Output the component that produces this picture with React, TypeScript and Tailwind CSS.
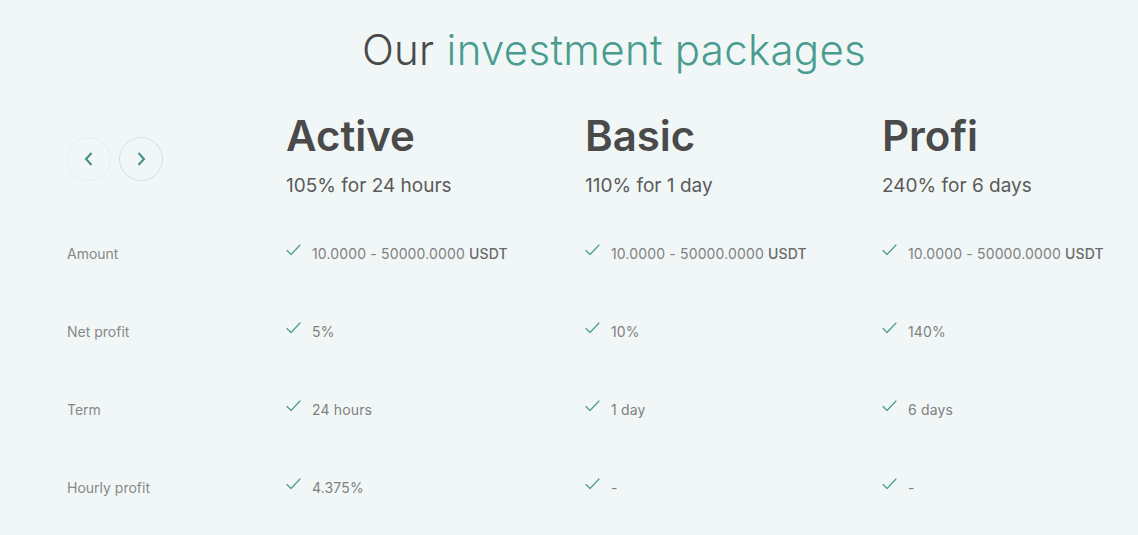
import React from "react";

const Check = () => (
  <svg width="15" height="12" viewBox="0 0 15 12" fill="none" className="shrink-0 mt-[-6px]">
    <path d="M1 6.5 L5 10.5 L14 1" stroke="#4a9c90" strokeWidth="1.2" strokeLinecap="round" strokeLinejoin="round" />
  </svg>
);

const plans = [
  { name: "Active", sub: "105% for 24 hours", profit: "5%", term: "24 hours", hourly: "4.375%" },
  { name: "Basic", sub: "110% for 1 day", profit: "10%", term: "1 day", hourly: "-" },
  { name: "Profi", sub: "240% for 6 days", profit: "140%", term: "6 days", hourly: "-" },
];

const Cell = ({ children }: { children: React.ReactNode }) => (
  <div className="flex items-center gap-[11px] h-[78px] text-[14px] text-[#808080] tracking-[0.15px]">
    <Check />
    <span>{children}</span>
  </div>
);

export default function App() {
  const font = { fontFamily: "Inter, 'Noto Sans', sans-serif" };
  return (
    <div className="w-[1138px] h-[535px] bg-[#f1f7f7] overflow-hidden" style={font}>
      <h1 className="text-center text-[42px] font-light text-[#4a4a4a] pt-[24px] pl-[90px] leading-[52px] tracking-[0.3px]">
        Our <span className="text-[#4a9c90]">investment packages</span>
      </h1>
      <div className="grid grid-cols-[219px_299px_297px_1fr] pl-[67px] mt-[23px]">
        <div className="flex items-center gap-[8px] h-[115px] pt-[4px]">
          <button className="w-[44px] h-[44px] rounded-full border border-[#e8eeee] flex items-center justify-center">
            <svg width="10" height="16" viewBox="0 0 10 16" fill="none">
              <path d="M7.5 2 L2 8 L7.5 14" stroke="#3f8f86" strokeWidth="2" />
            </svg>
          </button>
          <button className="w-[44px] h-[44px] rounded-full border border-[#d9dede] flex items-center justify-center">
            <svg width="10" height="16" viewBox="0 0 10 16" fill="none">
              <path d="M2.5 2 L8 8 L2.5 14" stroke="#3f8f86" strokeWidth="2" />
            </svg>
          </button>
        </div>
        {plans.map((p) => (
          <div key={p.name} className="h-[115px] pt-[11px]">
            <div className="text-[42px] font-semibold text-[#4a4a4a] leading-[52px]">{p.name}</div>
            <div className="text-[19px] text-[#5a5a5a] mt-[12px] leading-[24px]">{p.sub}</div>
          </div>
        ))}

        <div className="h-[78px] flex items-center text-[14px] text-[#888888]">Amount</div>
        {plans.map((p) => (
          <Cell key={p.name + "a"}>
            10.0000 - 50000.0000 <span className="font-medium text-[#6a6a6a]">USDT</span>
          </Cell>
        ))}

        <div className="h-[78px] flex items-center text-[14px] text-[#888888]">Net profit</div>
        {plans.map((p) => (
          <Cell key={p.name + "b"}>{p.profit}</Cell>
        ))}

        <div className="h-[78px] flex items-center text-[14px] text-[#888888]">Term</div>
        {plans.map((p) => (
          <Cell key={p.name + "c"}>{p.term}</Cell>
        ))}

        <div className="h-[78px] flex items-center text-[14px] text-[#888888]">Hourly profit</div>
        {plans.map((p) => (
          <Cell key={p.name + "d"}>{p.hourly}</Cell>
        ))}
      </div>
    </div>
  );
}
